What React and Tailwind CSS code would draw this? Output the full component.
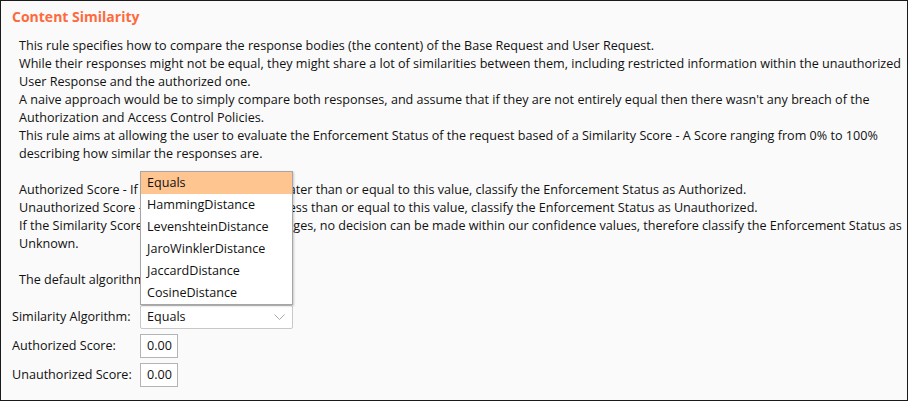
import React from 'react';

const font = "font-['Open_Sans','Noto_Sans',sans-serif]";

const introLines = [
  'This rule specifies how to compare the response bodies (the content) of the Base Request and User Request.',
  'While their responses might not be equal, they might share a lot of similarities between them, including restricted information within the unauthorized',
  'User Response and the authorized one.',
  "A naive approach would be to simply compare both responses, and assume that if they are not entirely equal then there wasn't any breach of the",
  'Authorization and Access Control Policies.',
  'This rule aims at allowing the user to evaluate the Enforcement Status of the request based of a Similarity Score - A Score ranging from 0% to 100%',
  'describing how similar the responses are.',
  '',
  'Authorized Score - If the Similarity Score is greater than or equal to this value, classify the Enforcement Status as Authorized.',
  'Unauthorized Score - If the Similarity Score is less than or equal to this value, classify the Enforcement Status as Unauthorized.',
  'If the Similarity Score is between these two ranges, no decision can be made within our confidence values, therefore classify the Enforcement Status as',
  'Unknown.',
  '',
  'The default algorithm is Equals.',
];

const algorithms = ['Equals', 'HammingDistance', 'LevenshteinDistance', 'JaroWinklerDistance', 'JaccardDistance', 'CosineDistance'];

const App = () => {
  return (
    <div className={`w-[908px] h-[401px] border border-[#1a1a1a] bg-[#fafafa] text-[#111] text-[12.6px] ${font} overflow-hidden`}>
      {/* Title */}
      <div className="pl-[11px] pt-[6px] h-[36px]">
        <h2 className="text-[14px] font-bold leading-[20px] text-[#ff6a3d]">Content Similarity</h2>
      </div>

      {/* Description */}
      <div className="pl-[18px]">
        {introLines.map((line, i) => (
          <div key={i} className="h-[18px] leading-[18px] whitespace-nowrap">
            {line}
          </div>
        ))}
      </div>

      {/* Form */}
      <div className="pl-[11px] mt-[16px] flex flex-col gap-[5px]">
        <div className="flex items-center h-[24px]">
          <label className="w-[128px]">Similarity Algorithm:</label>
          <div className="relative">
            {/* Open list */}
            <ul className="absolute bottom-full left-0 w-[153px] bg-white border border-[#a6a6a6] shadow-[1px_1px_2px_rgba(0,0,0,0.2)] z-10">
              {algorithms.map((a, i) => (
                <li
                  key={a}
                  className={`h-[22px] leading-[22px] pl-[6px] ${i === 0 ? 'bg-[#ffc591]' : ''}`}
                >
                  {a}
                </li>
              ))}
            </ul>
            <div className="w-[153px] h-[24px] bg-white border border-[#c8c8c8] rounded-[2px] flex items-center justify-between pl-[6px] pr-[7px]">
              <span>Equals</span>
              <svg width="11" height="6" viewBox="0 0 11 6" fill="none">
                <path d="M0.5 0.5l5 5 5-5" stroke="#a8a8a8" strokeWidth="1" />
              </svg>
            </div>
          </div>
        </div>
        <div className="flex items-center h-[24px]">
          <label className="w-[128px]">Authorized Score:</label>
          <div className="w-[38px] h-[24px] bg-white border border-[#b4b4b4] flex items-center pl-[6px]">0.00</div>
        </div>
        <div className="flex items-center h-[24px]">
          <label className="w-[128px]">Unauthorized Score:</label>
          <div className="w-[38px] h-[24px] bg-white border border-[#b4b4b4] flex items-center pl-[6px]">0.00</div>
        </div>
      </div>
    </div>
  );
};

export default App;
